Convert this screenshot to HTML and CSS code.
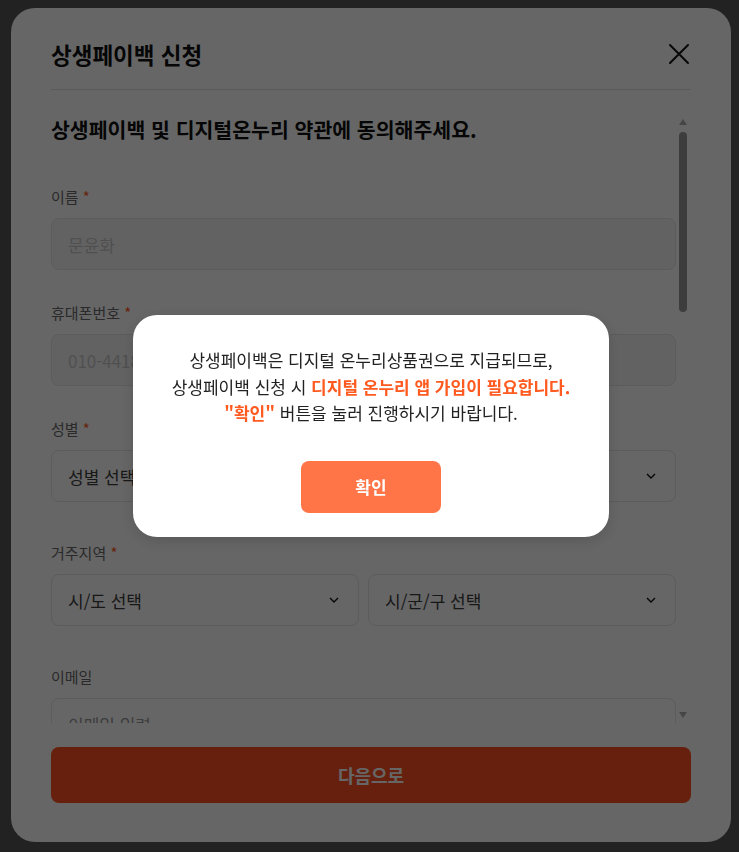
FILE: index.html
```html
<!DOCTYPE html>
<html lang="ko">
  <head>
    <meta charset="UTF-8" />
    <meta name="viewport" content="width=device-width, initial-scale=1.0" />
    <title>상생페이백 신청</title>
    <link rel="stylesheet" href="styles.css">
  </head>
  <body>
    <div class="modal">
      <div class="modal-header">
        <h2 class="modal-title">상생페이백 신청</h2>
        <button class="close-btn" aria-label="닫기">
          <svg width="24" height="24" viewBox="0 0 24 24" fill="none" stroke="#111" stroke-width="2" stroke-linecap="round">
            <path d="M3 3L21 21M21 3L3 21" />
          </svg>
        </button>
      </div>

      <div class="modal-scroll">
        <div class="modal-body">
          <p class="lead">상생페이백 및 디지털온누리 약관에 동의해주세요.</p>

          <div class="field">
            <label class="label">이름 <span class="req">*</span></label>
            <input class="input" type="text" value="문윤화" readonly />
          </div>

          <div class="field">
            <label class="label">휴대폰번호 <span class="req">*</span></label>
            <input class="input" type="text" value="010-4418-2093" readonly />
          </div>

          <div class="field field-lg">
            <label class="label">성별 <span class="req">*</span></label>
            <div class="select">
              <span>성별 선택</span>
              <svg width="10" height="6" viewBox="0 0 10 6" fill="none" stroke="#111" stroke-width="1.4"><path d="M1 1L5 5L9 1" /></svg>
            </div>
          </div>

          <div class="field field-lg">
            <label class="label">거주지역 <span class="req">*</span></label>
            <div class="row">
              <div class="select">
                <span>시/도 선택</span>
                <svg width="10" height="6" viewBox="0 0 10 6" fill="none" stroke="#111" stroke-width="1.4"><path d="M1 1L5 5L9 1" /></svg>
              </div>
              <div class="select">
                <span>시/군/구 선택</span>
                <svg width="10" height="6" viewBox="0 0 10 6" fill="none" stroke="#111" stroke-width="1.4"><path d="M1 1L5 5L9 1" /></svg>
              </div>
            </div>
          </div>

          <div class="field">
            <label class="label">이메일</label>
            <input class="input input-white" type="text" placeholder="이메일 입력" />
          </div>
        </div>

        <div class="scrollbar">
          <div class="scroll-up"></div>
          <div class="scroll-track"><div class="scroll-thumb"></div></div>
          <div class="scroll-down"></div>
        </div>
      </div>

      <button class="next-btn">다음으로</button>
    </div>

    <div class="dim">
      <div class="alert">
        <p class="alert-text">
          상생페이백은 디지털 온누리상품권으로 지급되므로,<br>
          상생페이백 신청 시 <strong>디지털 온누리 앱 가입이 필요합니다.</strong><br>
          <strong>"확인"</strong> 버튼을 눌러 진행하시기 바랍니다.
        </p>
        <button class="alert-btn">확인</button>
      </div>
    </div>
  </body>
</html>
```

FILE: styles.css
```css
* {
  box-sizing: border-box;
}
body {
  margin: 0;
  height: 852px;
  overflow: hidden;
  background-color: #565656;
  font-family: "Noto Sans CJK KR", sans-serif;
}
.modal {
  display: flex;
  flex-direction: column;
  width: 720px;
  height: 834px;
  margin: 8px 0 0 11px;
  padding: 0 40px 39px;
  background-color: white;
  border-radius: 24px;
}
.modal-header {
  display: flex;
  justify-content: space-between;
  align-items: center;
  padding: 30px 0 19px;
  border-bottom: 1px solid #e0e0e0;
}
.modal-title {
  margin: 0;
  font-size: 22.5px;
  line-height: 32px;
  font-weight: 700;
  color: #111;
}
.close-btn {
  width: 24px;
  height: 24px;
  padding: 0;
  border: none;
  background: none;
}
.modal-scroll {
  display: flex;
  height: 609px;
  margin-top: 24px;
}
.modal-body {
  flex: 1;
  overflow: hidden;
}
.scrollbar {
  display: flex;
  flex-direction: column;
  width: 15px;
}
.scroll-up {
  width: 0;
  height: 0;
  margin: 5px 0 4px 3px;
  border-left: 4.5px solid transparent;
  border-right: 4.5px solid transparent;
  border-bottom: 6px solid #b0b0b0;
}
.scroll-track {
  flex: 1;
  padding-top: 3px;
}
.scroll-thumb {
  width: 8px;
  height: 180px;
  margin-left: 3px;
  border-radius: 4px;
  background-color: #999;
}
.scroll-down {
  width: 0;
  height: 0;
  margin: 4px 0 5px 3px;
  border-left: 4.5px solid transparent;
  border-right: 4.5px solid transparent;
  border-top: 6px solid #b0b0b0;
}
.lead {
  margin: 0 0 42px;
  font-size: 20.5px;
  line-height: 30px;
  font-weight: 700;
  color: #111;
}
.field {
  margin-bottom: 32px;
}
.field-lg {
  margin-bottom: 40px;
}
.label {
  display: block;
  margin-bottom: 10px;
  font-size: 15px;
  line-height: 22px;
  color: #6a6a6a;
}
.req {
  color: #ff5a1f;
}
.input {
  display: block;
  width: 100%;
  height: 52px;
  padding: 0 16px;
  border: 1px solid #e5e5e5;
  border-radius: 8px;
  background-color: #f6f6f6;
  font-family: inherit;
  font-size: 17px;
  color: #c8c8c8;
  outline: none;
}
.input-white {
  background-color: white;
}
.input::placeholder {
  color: #999;
}
.select {
  display: flex;
  justify-content: space-between;
  align-items: center;
  height: 52px;
  padding: 0 19px 0 16px;
  border: 1px solid #e5e5e5;
  border-radius: 8px;
  background-color: white;
  font-size: 17px;
  color: #3c3c3c;
}
.row {
  display: flex;
  gap: 9px;
}
.row .select {
  flex: 1;
}
.next-btn {
  flex-shrink: 0;
  height: 56px;
  margin-top: 24px;
  border: none;
  border-radius: 8px;
  background-color: #ff5222;
  color: white;
  font-family: inherit;
  font-size: 18px;
  font-weight: 700;
}
.dim {
  position: fixed;
  inset: 0;
  display: flex;
  justify-content: center;
  align-items: center;
  padding-left: 3px;
  background-color: rgba(0, 0, 0, 0.6);
}
.alert {
  width: 476px;
  height: 222px;
  padding: 32px 24px 0;
  background-color: white;
  border-radius: 24px;
  text-align: center;
  box-shadow: 0 4px 16px rgba(0, 0, 0, 0.15);
}
.alert-text {
  margin: 0;
  font-size: 17px;
  line-height: 26.5px;
  color: #222;
}
.alert-text strong {
  color: #ff5a1f;
}
.alert-btn {
  width: 140px;
  height: 52px;
  margin-top: 34px;
  border: none;
  border-radius: 8px;
  background-color: #ff7548;
  color: white;
  font-family: inherit;
  font-size: 17px;
  font-weight: 700;
}
```
